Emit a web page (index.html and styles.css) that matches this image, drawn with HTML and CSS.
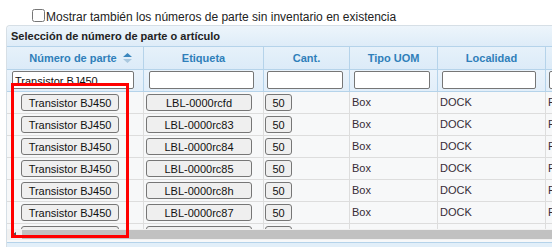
FILE: index.html
```html
<!DOCTYPE html>
<html lang="es">
<head>
  <meta charset="UTF-8">
  <title>Selección de número de parte</title>
  <link rel="stylesheet" href="styles.css">
</head>
<body>
  <div class="opt">
    <label><input type="checkbox" class="chk">Mostrar también los números de parte sin inventario en existencia</label>
  </div>

  <div class="grid">
    <div class="caption">Selección de número de parte o artículo</div>

    <div class="row head">
      <div class="cell c1">Número de parte
        <svg class="sort" width="9" height="10" viewBox="0 0 9 10">
          <polygon points="0,4 4.5,0 9,4" fill="#3a86bd"/>
          <polygon points="0,6 9,6 4.5,10" fill="#a9c8df"/>
        </svg>
      </div>
      <div class="cell c2">Etiqueta</div>
      <div class="cell c3">Cant.</div>
      <div class="cell c4">Tipo UOM</div>
      <div class="cell c5">Localidad</div>
      <div class="cell c6"></div>
    </div>

    <div class="row filter">
      <div class="cell c1"><input type="text" value="Transistor BJ450"></div>
      <div class="cell c2"><input type="text"></div>
      <div class="cell c3"><input type="text"></div>
      <div class="cell c4"><input type="text"></div>
      <div class="cell c5"><input type="text"></div>
      <div class="cell c6"><input type="text"></div>
    </div>

    <div class="rows">
      <div class="row data">
        <div class="cell c1"><button class="b-part">Transistor BJ450</button></div>
        <div class="cell c2"><button class="b-lbl">LBL-0000rcfd</button></div>
        <div class="cell c3"><button class="b-qty">50</button></div>
        <div class="cell c4">Box</div>
        <div class="cell c5">DOCK</div>
        <div class="cell c6">F</div>
      </div>
      <div class="row data">
        <div class="cell c1"><button class="b-part">Transistor BJ450</button></div>
        <div class="cell c2"><button class="b-lbl">LBL-0000rc83</button></div>
        <div class="cell c3"><button class="b-qty">50</button></div>
        <div class="cell c4">Box</div>
        <div class="cell c5">DOCK</div>
        <div class="cell c6">F</div>
      </div>
      <div class="row data">
        <div class="cell c1"><button class="b-part">Transistor BJ450</button></div>
        <div class="cell c2"><button class="b-lbl">LBL-0000rc84</button></div>
        <div class="cell c3"><button class="b-qty">50</button></div>
        <div class="cell c4">Box</div>
        <div class="cell c5">DOCK</div>
        <div class="cell c6">F</div>
      </div>
      <div class="row data">
        <div class="cell c1"><button class="b-part">Transistor BJ450</button></div>
        <div class="cell c2"><button class="b-lbl">LBL-0000rc85</button></div>
        <div class="cell c3"><button class="b-qty">50</button></div>
        <div class="cell c4">Box</div>
        <div class="cell c5">DOCK</div>
        <div class="cell c6">F</div>
      </div>
      <div class="row data">
        <div class="cell c1"><button class="b-part">Transistor BJ450</button></div>
        <div class="cell c2"><button class="b-lbl">LBL-0000rc8h</button></div>
        <div class="cell c3"><button class="b-qty">50</button></div>
        <div class="cell c4">Box</div>
        <div class="cell c5">DOCK</div>
        <div class="cell c6">F</div>
      </div>
      <div class="row data">
        <div class="cell c1"><button class="b-part">Transistor BJ450</button></div>
        <div class="cell c2"><button class="b-lbl">LBL-0000rc87</button></div>
        <div class="cell c3"><button class="b-qty">50</button></div>
        <div class="cell c4">Box</div>
        <div class="cell c5">DOCK</div>
        <div class="cell c6">F</div>
      </div>
      <div class="row data">
        <div class="cell c1"><button class="b-part">Transistor BJ450</button></div>
        <div class="cell c2"><button class="b-lbl">LBL-0000rc88</button></div>
        <div class="cell c3"><button class="b-qty">50</button></div>
        <div class="cell c4">Box</div>
        <div class="cell c5">DOCK</div>
        <div class="cell c6">F</div>
      </div>
    </div>

    <div class="hscroll">
      <div class="arrow"></div>
      <div class="thumb"></div>
    </div>
    <div class="pager"></div>
  </div>

  <!-- marca de resaltado -->
  <div class="highlight"></div>
</body>
</html>
```

FILE: styles.css
```css
html, body {
  overflow: hidden;
}

body {
  margin: 0;
  font-family: "Liberation Sans", Arial, sans-serif;
  color: #222;
  background: #fff;
}

.opt {
  height: 25px;
  box-sizing: border-box;
  padding: 9px 0 0 32px;
  font-size: 12px;
  line-height: 15px;
  white-space: nowrap;
}

.chk {
  width: 13px;
  height: 13px;
  margin: 0 1px 0 0;
  vertical-align: -1px;
}

.grid {
  margin-left: 6px;
  width: 600px;
  border: 1px solid #d6dfe6;
  border-bottom: none;
  border-radius: 4px 4px 0 0;
  background: #f7f8f9;
  font-size: 11px;
}

.caption {
  height: 20px;
  line-height: 20px;
  padding-left: 4px;
  font-weight: bold;
  color: #222;
  background: linear-gradient(#edf5fb, #deecf8);
  border-radius: 4px 4px 0 0;
}

.row {
  display: grid;
  grid-template-columns: 137px 120px 86px 88px 108px 100px;
}

.cell {
  box-sizing: border-box;
  border-right: 1px solid #ddd;
  white-space: nowrap;
  overflow: hidden;
}

.head {
  border-top: 1px solid #b5d3ea;
  border-bottom: 1px solid #b5d3ea;
  background: linear-gradient(#e6f1fa, #dcebf8);
}

.head .cell {
  height: 22px;
  line-height: 22px;
  text-align: center;
  font-weight: bold;
  color: #2f7fba;
  border-right-color: #b5d3ea;
}

.head .c1 {
  padding-left: 11px;
}

.sort {
  margin-left: 3px;
  vertical-align: -1px;
}

.filter {
  border-bottom: 1px solid #b5d3ea;
  background: linear-gradient(#eaf3fb, #e2eef9);
}

.filter .cell {
  height: 21px;
  padding-top: 1px;
  border-right-color: #b5d3ea;
}

.filter input {
  box-sizing: border-box;
  height: 18px;
  margin: 0 0 0 4px;
  padding: 0 2px;
  border: 1px solid #767676;
  border-radius: 2px;
  background: #fff;
  font: 11px "Liberation Sans", Arial, sans-serif;
  line-height: 16px;
  color: #111;
}

.filter .c1 input { width: 122px; margin-left: 5px; padding: 1px 0 0 2px; }
.filter .c2 input { width: 105px; margin-left: 5px; }
.filter .c3 input { width: 76px; margin-left: 3px; }
.filter .c4 input { width: 76px; }
.filter .c5 input { width: 94px; }
.filter .c6 input { width: 90px; margin-left: 3px; }

.rows {
  height: 137px;
  overflow: hidden;
}

.data {
  border-bottom: 1px solid #ddd;
  background: #f7f8f9;
  color: #362b36;
}

.data .cell {
  height: 21px;
  line-height: 21px;
  padding-left: 2px;
  display: flex;
  align-items: center;
}

.data .c1 { padding-left: 14px; }
.data .c3 { padding-left: 1px; }

button {
  box-sizing: border-box;
  height: 17px;
  padding: 0;
  border: 1px solid #767676;
  border-radius: 3px;
  background: #efefef;
  color: #111;
  font: 11px "Liberation Sans", Arial, sans-serif;
  text-align: center;
}

.b-part { width: 98px; }
.b-lbl { width: 106px; }
.b-qty { width: 27px; }

.hscroll {
  display: flex;
  height: 11px;
  background: #f1f1f1;
}

.arrow {
  width: 15px;
  position: relative;
}

.arrow::before {
  content: "";
  position: absolute;
  left: 6px;
  top: 3px;
  border-right: 3px solid #505050;
  border-top: 2.5px solid transparent;
  border-bottom: 2.5px solid transparent;
}

.thumb {
  flex: 1;
  margin: 1px 0;
  background: #c1c1c1;
}

.pager {
  height: 6px;
  margin-top: 2px;
  border-top: 1px solid #b5d3ea;
  background: #e2eff9;
}

.highlight {
  position: absolute;
  left: 11px;
  top: 83px;
  width: 118px;
  height: 155px;
  box-sizing: border-box;
  border: 3px solid #f00;
}
```
